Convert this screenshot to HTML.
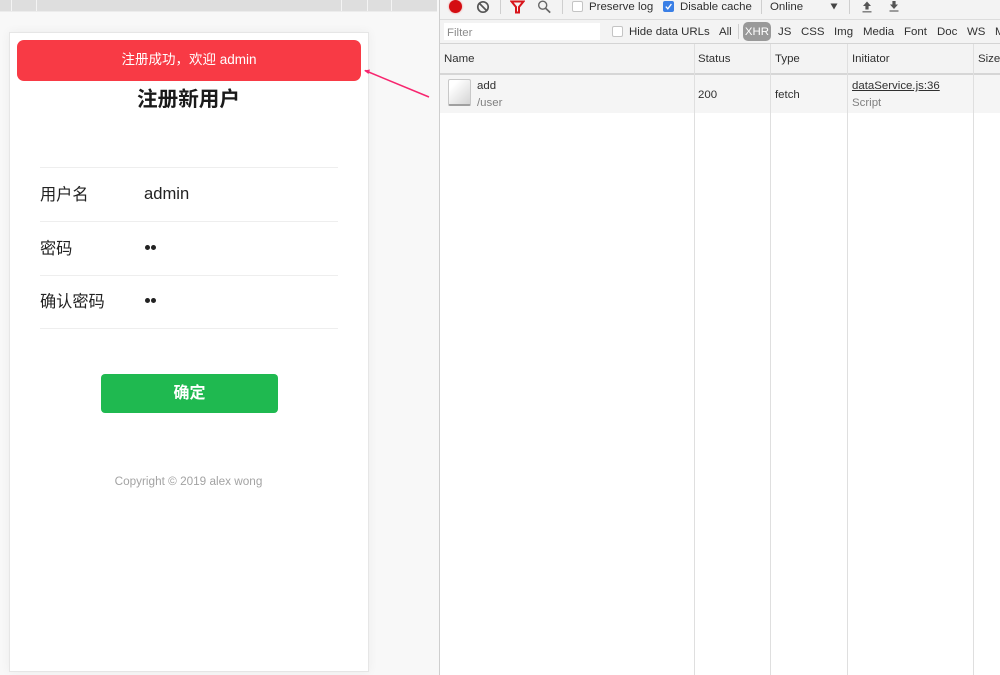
<!DOCTYPE html>
<html>
<head>
<meta charset="utf-8">
<style>
html,body{margin:0;padding:0;width:1000px;height:675px;overflow:hidden;background:#fff;}
#w{position:absolute;left:0;top:0;width:1000px;height:675px;overflow:hidden;filter:blur(.35px);font-family:"Liberation Sans","Noto Sans CJK SC",sans-serif;}
.a{position:absolute;}
.t{position:absolute;white-space:nowrap;line-height:1;}
.d{font-size:11.45px;color:#303030;}
.v{position:absolute;top:44px;height:631px;width:1px;background:#dfdfdf;}
</style>
</head>
<body>
<div id="w">
<!-- left pane -->
<div class="a" style="left:0;top:0;width:439px;height:675px;background:#f8f8f8;"></div>
<div class="a" style="left:0;top:0;width:437px;height:11px;background:#dedede;border-bottom:1px solid #ececec;"></div>
<div class="a" style="left:11px;top:0;width:1px;height:11px;background:#f4f4f4;"></div>
<div class="a" style="left:36px;top:0;width:1px;height:11px;background:#f4f4f4;"></div>
<div class="a" style="left:341px;top:0;width:1px;height:11px;background:#f4f4f4;"></div>
<div class="a" style="left:367px;top:0;width:1px;height:11px;background:#f4f4f4;"></div>
<div class="a" style="left:391px;top:0;width:1px;height:11px;background:#f4f4f4;"></div>

<!-- phone card -->
<div class="a" style="left:9px;top:32px;width:360px;height:640px;background:#fff;border:1px solid #e6e6e6;box-sizing:border-box;box-shadow:0 0 10px rgba(0,0,0,.05);"></div>

<!-- toast -->
<div class="a" style="left:17px;top:40px;width:344px;height:41px;background:#f83a45;border-radius:7px;"></div>
<div class="t" style="left:17px;top:53px;width:344px;text-align:center;font-size:13.5px;color:#fff;">注册成功，欢迎 admin</div>

<!-- arrow -->
<svg class="a" style="left:360px;top:65px;" width="75" height="40" viewBox="0 0 75 40">
<path d="M5 5.5 L69 32" stroke="#f7266f" stroke-width="1.5" fill="none"/>
<path d="M4 5.5 L10 4.5 L8.5 9 Z" fill="#f7266f"/>
</svg>

<div class="t" style="left:9px;top:90px;width:359px;text-align:center;font-size:20.6px;font-weight:bold;color:#1a1a1a;">注册新用户</div>

<div class="a" style="left:40px;top:167px;width:298px;height:1px;background:#eeeeee;"></div>
<div class="a" style="left:40px;top:221px;width:298px;height:1px;background:#eeeeee;"></div>
<div class="a" style="left:40px;top:275px;width:298px;height:1px;background:#eeeeee;"></div>
<div class="a" style="left:40px;top:328px;width:298px;height:1px;background:#eeeeee;"></div>

<div class="t" style="left:40px;top:187px;font-size:16.2px;color:#222;">用户名</div>
<div class="t" style="left:144px;top:186px;font-size:16.6px;color:#222;">admin</div>
<div class="t" style="left:40px;top:241px;font-size:16.2px;color:#222;">密码</div>
<div class="a" style="left:145px;top:245px;width:5px;height:5px;border-radius:50%;background:#222;"></div>
<div class="a" style="left:150.5px;top:245px;width:5px;height:5px;border-radius:50%;background:#222;"></div>
<div class="t" style="left:40px;top:294px;font-size:16.2px;color:#222;">确认密码</div>
<div class="a" style="left:145px;top:298px;width:5px;height:5px;border-radius:50%;background:#222;"></div>
<div class="a" style="left:150.5px;top:298px;width:5px;height:5px;border-radius:50%;background:#222;"></div>

<!-- button -->
<div class="a" style="left:101px;top:374px;width:177px;height:39px;background:#1fb950;border-radius:4px;"></div>
<div class="t" style="left:101px;top:386px;width:177px;text-align:center;font-size:16px;font-weight:bold;color:#fff;">确定</div>

<div class="t" style="left:9px;top:476px;width:359px;text-align:center;font-size:11.75px;color:#a3a3a3;">Copyright © 2019 alex wong</div>

<!-- devtools -->
<div class="a" style="left:439px;top:0;width:1px;height:675px;background:#cfcfcf;"></div>
<div class="a" style="left:440px;top:0;width:560px;height:44px;background:#f3f3f3;"></div>
<div class="a" style="left:440px;top:19px;width:560px;height:1px;background:#dcdcdc;"></div>
<div class="a" style="left:440px;top:43px;width:560px;height:1px;background:#d4d4d4;"></div>

<!-- toolbar icons -->
<div class="a" style="left:449px;top:0;width:13px;height:13px;border-radius:50%;background:#d40d12;box-shadow:0 0 2px #e88;"></div>
<svg class="a" style="left:476px;top:0;" width="14" height="14" viewBox="0 0 14 14"><circle cx="7" cy="7" r="5.2" fill="none" stroke="#555" stroke-width="1.7"/><path d="M3.4 3.4 L10.6 10.6" stroke="#555" stroke-width="1.7"/></svg>
<div class="a" style="left:500px;top:0;width:1px;height:14px;background:#cfcfcf;"></div>
<svg class="a" style="left:510px;top:0;" width="15" height="14" viewBox="0 0 15 14"><path d="M1.5 1.5 H13.5 L9 7 V12.5 H6 V7 Z" fill="none" stroke="#d8141a" stroke-width="2"/></svg>
<svg class="a" style="left:537px;top:0;" width="15" height="14" viewBox="0 0 15 14"><circle cx="5.7" cy="5.2" r="4" fill="none" stroke="#666" stroke-width="1.4"/><path d="M8.6 8.2 L13.2 12.6" stroke="#666" stroke-width="1.7"/></svg>
<div class="a" style="left:562px;top:0;width:1px;height:14px;background:#cfcfcf;"></div>
<div class="a" style="left:572px;top:1px;width:11px;height:11px;background:#fff;border:1px solid #c4c4c4;border-radius:2px;box-sizing:border-box;"></div>
<div class="t d" style="left:589px;top:2px;">Preserve log</div>
<div class="a" style="left:663px;top:1px;width:11px;height:11px;background:#3a7fe6;border-radius:2px;"></div>
<svg class="a" style="left:663px;top:1px;" width="11" height="11" viewBox="0 0 11 11"><path d="M2.8 5.6 L4.8 7.8 L8.4 3" fill="none" stroke="#fff" stroke-width="1.3"/></svg>
<div class="t d" style="left:680px;top:2px;">Disable cache</div>
<div class="a" style="left:761px;top:0;width:1px;height:14px;background:#cfcfcf;"></div>
<div class="t d" style="left:770px;top:2px;">Online</div>
<svg class="a" style="left:830px;top:3px;" width="8" height="7" viewBox="0 0 8 7"><path d="M0.5 0.5 H7.5 L4 6.5 Z" fill="#444"/></svg>
<div class="a" style="left:849px;top:0;width:1px;height:14px;background:#cfcfcf;"></div>
<svg class="a" style="left:861px;top:1px;" width="12" height="12" viewBox="0 0 12 12"><path d="M6 0.5 L10 5 H7.6 V8.5 H4.4 V5 H2 Z" fill="#555"/><path d="M1.5 10.8 H10.5" stroke="#777" stroke-width="1.4"/></svg>
<svg class="a" style="left:888px;top:0;" width="12" height="13" viewBox="0 0 12 13"><path d="M4.4 1 H7.6 V4.5 H10 L6 9 L2 4.5 H4.4 Z" fill="#555"/><path d="M1.5 11 H10.5" stroke="#777" stroke-width="1.4"/></svg>

<!-- filter row -->
<div class="a" style="left:444px;top:23px;width:156px;height:17px;background:#fff;"></div>
<div class="t" style="left:447px;top:28px;font-size:11.45px;color:#8c8c8c;">Filter</div>
<div class="a" style="left:612px;top:26px;width:11px;height:11px;background:#fff;border:1px solid #c4c4c4;border-radius:2px;box-sizing:border-box;"></div>
<div class="t d" style="left:629px;top:27px;">Hide data URLs</div>
<div class="t d" style="left:719px;top:27px;">All</div>
<div class="a" style="left:738px;top:24px;width:1px;height:15px;background:#cfcfcf;"></div>
<div class="a" style="left:743px;top:22px;width:28px;height:19px;background:#999;border-radius:5px;"></div>
<div class="t" style="left:743px;top:27px;width:28px;text-align:center;font-size:11.45px;color:#fff;">XHR</div>
<div class="t d" style="left:778px;top:27px;">JS</div>
<div class="t d" style="left:801px;top:27px;">CSS</div>
<div class="t d" style="left:834px;top:27px;">Img</div>
<div class="t d" style="left:863px;top:27px;">Media</div>
<div class="t d" style="left:904px;top:27px;">Font</div>
<div class="t d" style="left:937px;top:27px;">Doc</div>
<div class="t d" style="left:967px;top:27px;">WS</div>
<div class="t d" style="left:995px;top:27px;">Manifest</div>

<!-- table header -->
<div class="a" style="left:440px;top:44px;width:560px;height:29px;background:#f3f3f3;"></div>
<div class="a" style="left:440px;top:73px;width:560px;height:2px;background:#d6d6d6;"></div>
<div class="a" style="left:440px;top:75px;width:560px;height:38px;background:#f5f5f5;"></div>
<div class="v" style="left:694px;"></div>
<div class="v" style="left:770px;"></div>
<div class="v" style="left:847px;"></div>
<div class="v" style="left:973px;"></div>
<div class="t d" style="left:444px;top:54px;">Name</div>
<div class="t d" style="left:698px;top:54px;">Status</div>
<div class="t d" style="left:775px;top:54px;">Type</div>
<div class="t d" style="left:852px;top:54px;">Initiator</div>
<div class="t d" style="left:978px;top:54px;">Size</div>

<!-- row -->
<div class="a" style="left:448px;top:79px;width:23px;height:27px;box-sizing:border-box;border:1px solid #c8c8c8;border-bottom:2px solid #a0a0a0;border-radius:2px;background:linear-gradient(135deg,#fff 20%,#d4d4d4 100%);"></div>
<div class="t d" style="left:477px;top:81px;">add</div>
<div class="t" style="left:477px;top:98px;font-size:11.45px;color:#808080;">/user</div>
<div class="t d" style="left:698px;top:90px;">200</div>
<div class="t d" style="left:775px;top:90px;">fetch</div>
<div class="t d" style="left:852px;top:81px;text-decoration:underline;">dataService.js:36</div>
<div class="t" style="left:852px;top:98px;font-size:11.45px;color:#808080;">Script</div>
</div>
</body>
</html>
